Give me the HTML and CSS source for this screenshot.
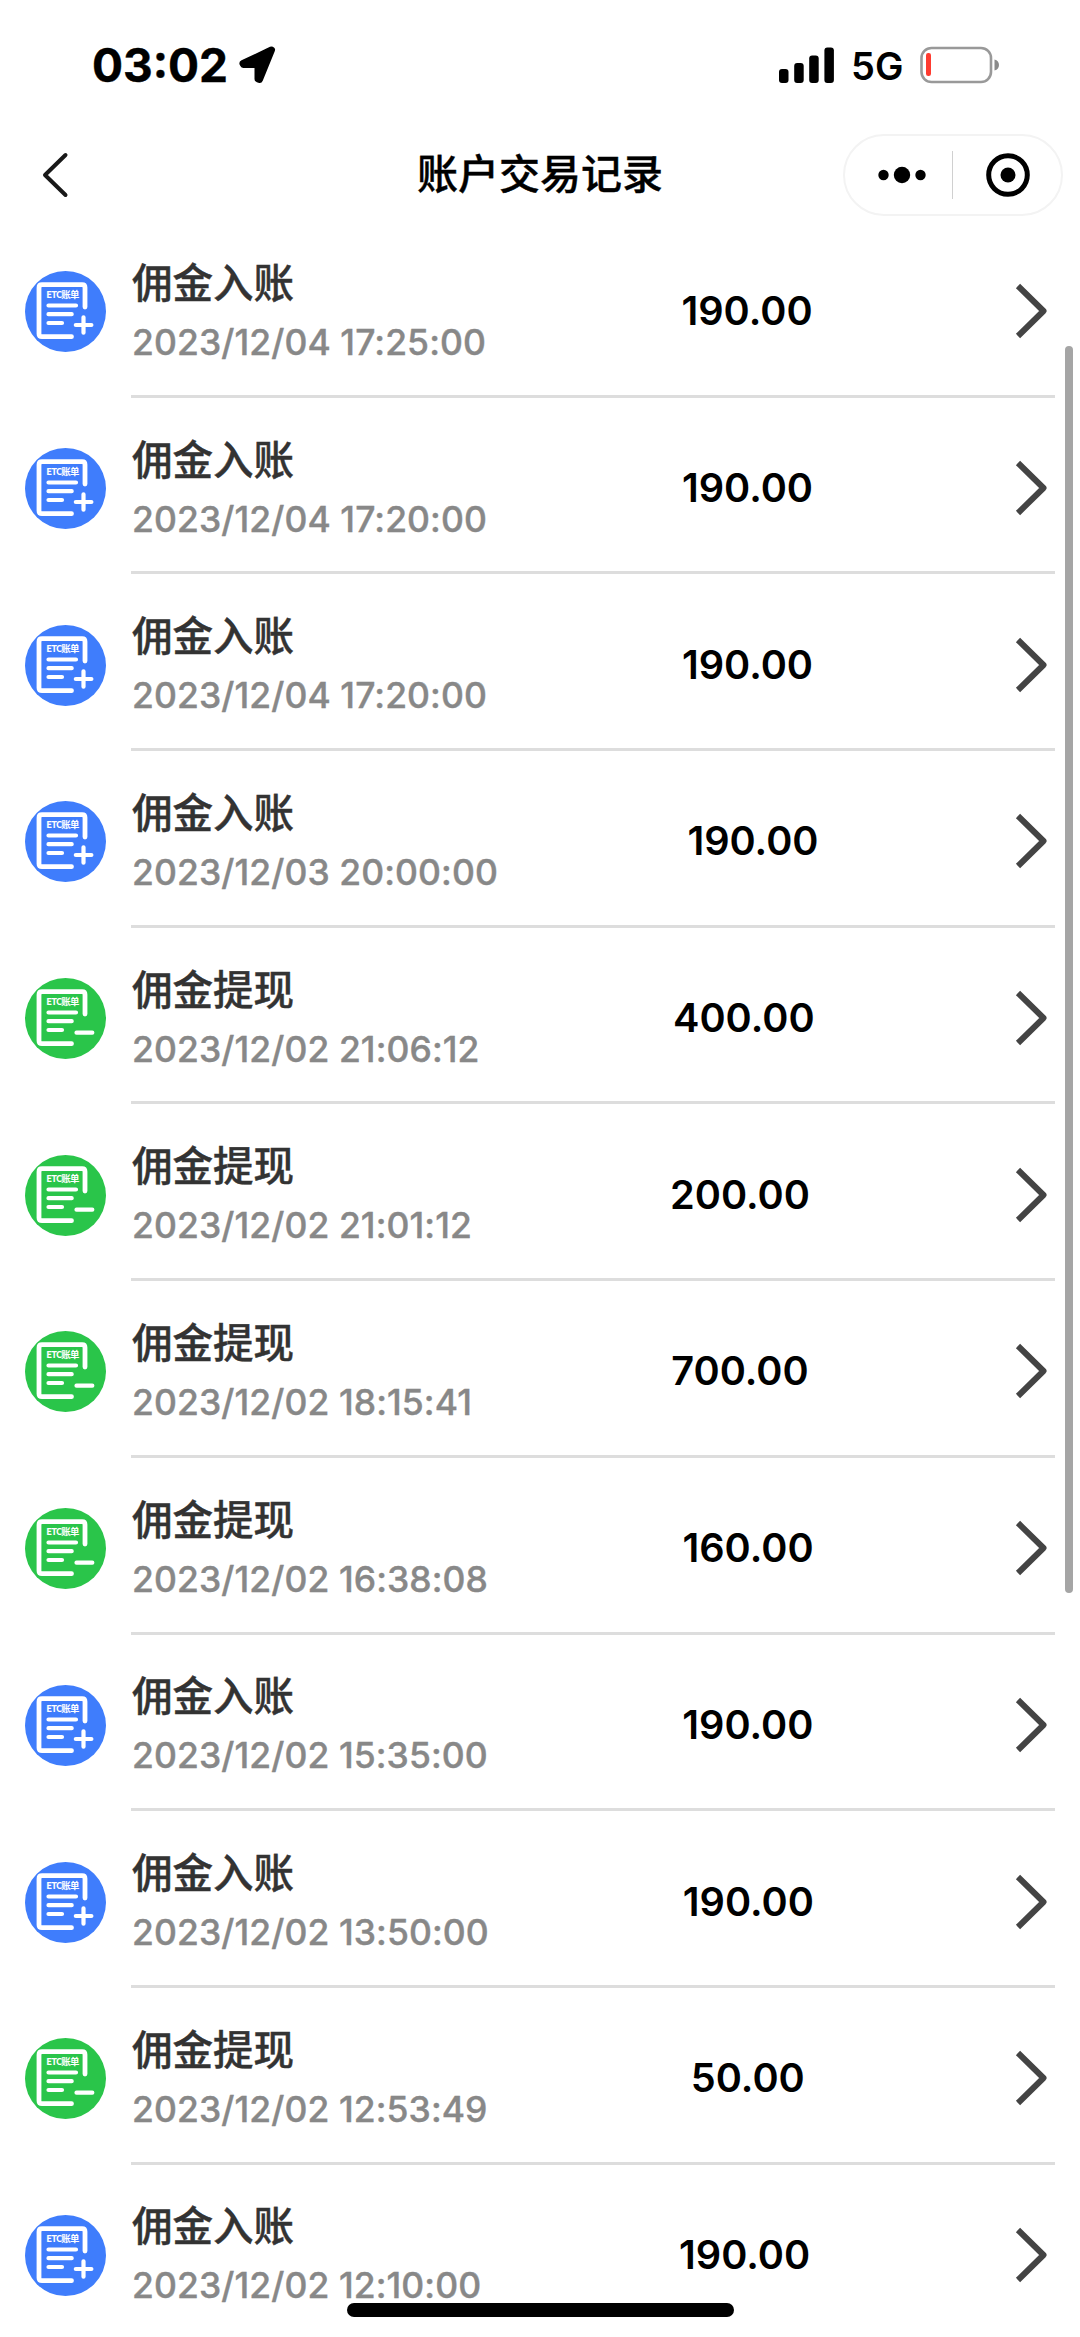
FILE: index.html
```html
<!DOCTYPE html>
<html lang="zh-CN">
<head>
    <meta charset="UTF-8">
    <meta name="viewport" content="width=device-width, initial-scale=1.0">
    <title>账户交易记录</title>
    <link rel="stylesheet" href="styles.css">
</head>
<body>
    <div class="status">
        <div class="time">03:02</div>
        <svg class="location" width="38" height="38" viewBox="0 0 38 38">
            <path d="M33.500 4L5 17.500L5.500 18.500H20V33L21.500 33.500Z" fill="#000" stroke="#000" stroke-width="7" stroke-linejoin="round" />
        </svg>
        <svg class="signal" width="56" height="36" viewBox="0 0 56 36">
            <rect x="0" y="22" width="9.500" height="14" rx="3" />
            <rect x="15.200" y="16" width="9.500" height="20" rx="3" />
            <rect x="30.200" y="8.500" width="9.500" height="27.500" rx="3" />
            <rect x="45.400" y="0.500" width="9.500" height="35.500" rx="3" />
        </svg>
        <div class="network">5G</div>
        <svg class="battery" width="80" height="38" viewBox="0 0 80 38">
            <rect x="1.500" y="2" width="69.500" height="34" rx="10" fill="none" stroke="#999" stroke-width="2.600" />
            <rect x="6" y="7" width="5" height="23" rx="2.200" fill="#fe3b30" />
            <path d="M74.500 13.500C80.500 14.500 80.500 23.500 74.500 24.500Z" fill="#8a8a8a" />
        </svg>
    </div>
    <div class="header">
        <svg class="back" width="28" height="46" viewBox="0 0 28 46">
            <path d="M24.500 3L4 23L24.500 43" fill="none" stroke="#191919" stroke-width="4" stroke-linecap="round" stroke-linejoin="round" />
        </svg>
        <h1>账户交易记录</h1>
        <div class="capsule">
            <svg class="more" width="50" height="18" viewBox="0 0 50 18">
                <circle cx="6.500" cy="9" r="5.200" />
                <circle cx="25" cy="9" r="8.200" />
                <circle cx="43.500" cy="9" r="5.200" />
            </svg>
            <div class="line"></div>
            <svg class="close" width="46" height="46" viewBox="0 0 46 46">
                <circle cx="23" cy="23" r="19.300" fill="none" stroke="#000" stroke-width="5" />
                <circle cx="23" cy="23" r="7.500" />
            </svg>
        </div>
    </div>
    <div class="list" id="list"></div>
    <div class="scrollbar"></div>
    <div class="home-bar"></div>
    <script type="text/javascript">
        const names = { in: '佣金入账', out: '佣金提现' };
        const signs = {
            in: 'M50.800 54H66.400M58.500 46.300V61.700',
            out: 'M51.500 54.700H67.300'
        };
        const records = [
            { type: 'in', date: '2023/12/04 17:25:00', amount: '190.00' },
            { type: 'in', date: '2023/12/04 17:20:00', amount: '190.00' },
            { type: 'in', date: '2023/12/04 17:20:00', amount: '190.00' },
            { type: 'in', date: '2023/12/03 20:00:00', amount: '190.00' },
            { type: 'out', date: '2023/12/02 21:06:12', amount: '400.00' },
            { type: 'out', date: '2023/12/02 21:01:12', amount: '200.00' },
            { type: 'out', date: '2023/12/02 18:15:41', amount: '700.00' },
            { type: 'out', date: '2023/12/02 16:38:08', amount: '160.00' },
            { type: 'in', date: '2023/12/02 15:35:00', amount: '190.00' },
            { type: 'in', date: '2023/12/02 13:50:00', amount: '190.00' },
            { type: 'out', date: '2023/12/02 12:53:49', amount: '50.00' },
            { type: 'in', date: '2023/12/02 12:10:00', amount: '190.00' }
        ];

        let html = '';
        for (let i = 0; i < records.length; i++) {
            html += `
                <div class="item">
                    <svg class="icon ${records[i].type}" viewBox="0 0 81 81">
                        <circle cx="40.5" cy="40.5" r="40.5" fill="currentColor" />
                        <g fill="none" stroke="#fff" stroke-width="4.2" stroke-linecap="round">
                            <path stroke-width="4.8" d="M60 36V16.500Q60 13.700 57.200 13.700H17Q14 13.700 14 16.700V62.700Q14 65.700 17 65.700H46.500" />
                            <path d="M23.500 34.500H51M23.500 43.200H46.700M23.500 52H37" />
                            <path d="${signs[records[i].type]}" />
                        </g>
                        <text class="bill-text" x="21.3" y="27.4" textLength="33">ETC账单</text>
                    </svg>
                    <div class="content">
                        <div class="info">
                            <div class="name">${names[records[i].type]}</div>
                            <div class="date">${records[i].date}</div>
                        </div>
                        <div class="amount">${records[i].amount}</div>
                        <svg class="arrow" width="45" height="60" viewBox="-5 0 45 60">
                            <path d="M5 5L30.500 30L5 55" fill="none" stroke="#444" stroke-width="6" stroke-linejoin="round" />
                        </svg>
                    </div>
                </div>
            `
        }
        document.querySelector('#list').innerHTML = html;
    </script>
</body>
</html>
```
FILE: styles.css
```css
* {
    margin: 0;
    padding: 0;
    box-sizing: border-box;
}
body {
    position: relative;
    width: 1080px;
    height: 2337px;
    overflow: hidden;
    background: #fff;
    color: #000;
    font-family: Inter, 'Noto Sans CJK SC', sans-serif;
}
svg {
    display: block;
    flex-shrink: 0;
}
.status {
    display: flex;
    align-items: center;
    height: 130px;
    padding: 0 80px 0 92px;
}
.time {
    width: 146px;
    font-size: 46px;
    font-weight: 700;
    line-height: 56px;
    white-space: nowrap;
    -webkit-text-stroke: 0.4px #000;
}
.signal {
    margin-left: auto;
    margin-right: 16px;
}
.network {
    width: 69px;
    font-size: 38px;
    font-weight: 600;
    line-height: 40px;
    padding-top: 2px;
}
.header {
    display: flex;
    align-items: center;
    height: 89px;
    padding: 0 17px 0 41px;
}
.header h1 {
    width: 248px;
    margin-left: 348px;
    padding-bottom: 1px;
    font-size: 41px;
    font-weight: 500;
    line-height: 60px;
    white-space: nowrap;
    -webkit-text-stroke: 0.4px #000;
}
.capsule {
    display: flex;
    align-items: center;
    width: 220px;
    height: 82px;
    margin-left: auto;
    padding-left: 32px;
    border: 2px solid #f3f3f3;
    border-radius: 41px;
}
.line {
    width: 1px;
    height: 48px;
    margin: 0 32px 0 25px;
    background: #d0d0d0;
}
.list {
    padding-top: 2px;
}
.item {
    display: flex;
    align-items: center;
    height: 176.7px;
    padding: 0 25px;
}
.icon {
    width: 81px;
    height: 81px;
    margin-top: 5px;
}
.icon.in {
    color: #3f7dfc;
}
.icon.out {
    color: #2ac54a;
}
.bill-text {
    fill: #fff;
    font-family: 'Noto Sans CJK SC', sans-serif;
    font-size: 9.4px;
    font-weight: 700;
}
.content {
    display: flex;
    align-items: center;
    justify-content: space-between;
    width: 924px;
    height: 100%;
    margin-left: 25px;
    padding: 7px 2px 0 1px;
    border-bottom: 3px solid #ddd;
    flex-shrink: 0;
}
.info {
    padding-top: 3px;
}
.name {
    margin-bottom: 4px;
    color: #333;
    font-size: 40.5px;
    font-weight: 500;
    line-height: 56px;
    -webkit-text-stroke: 0.4px #333;
}
.date {
    color: #888;
    font-size: 35.5px;
    font-weight: 500;
    line-height: 54px;
    letter-spacing: 0.08px;
    white-space: nowrap;
    -webkit-text-stroke: 0.4px #888;
}
.amount {
    font-size: 39.7px;
    font-weight: 600;
    line-height: 50px;
}
.scrollbar {
    position: absolute;
    top: 346px;
    left: 1065px;
    width: 8px;
    height: 1247px;
    border-radius: 4px;
    background: #a5a5a5;
}
.home-bar {
    position: absolute;
    top: 2303px;
    left: 347px;
    width: 387px;
    height: 14px;
    border-radius: 7px;
    background: #000;
}
```
